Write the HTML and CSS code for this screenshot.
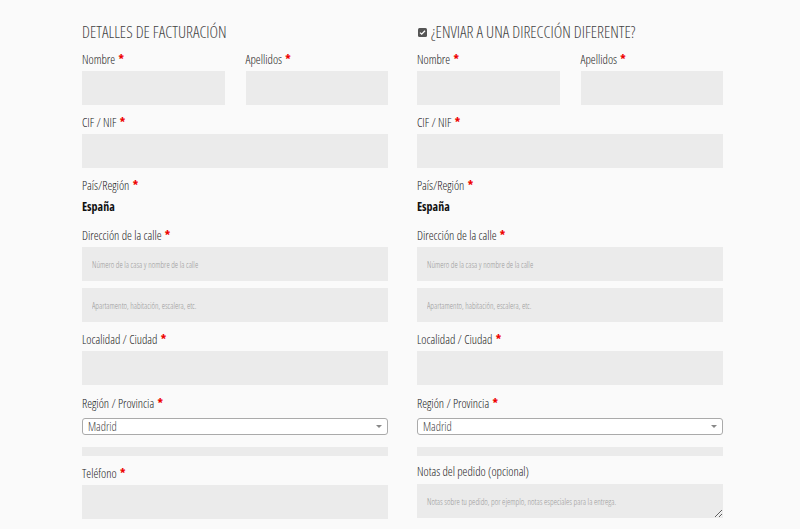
FILE: index.html
```html
<!DOCTYPE html>
<html lang="es">
<head>
<meta charset="utf-8">
<title>Checkout</title>
<link rel="stylesheet" href="styles.css">
</head>
<body>
<div class="page">
  <div class="col">
    <h3 class="title">DETALLES DE FACTURACIÓN</h3>
    <div class="pair">
      <div class="field"><label>Nombre <abbr>*</abbr></label><input class="inp" type="text"></div>
      <div class="field"><label>Apellidos <abbr>*</abbr></label><input class="inp" type="text"></div>
    </div>
    <div class="field"><label>CIF / NIF <abbr>*</abbr></label><input class="inp" type="text"></div>
    <div class="field country"><label>País/Región <abbr>*</abbr></label><strong class="value">España</strong></div>
    <div class="field"><label>Dirección de la calle <abbr>*</abbr></label><input class="inp" type="text" placeholder="Número de la casa y nombre de la calle"><input class="inp second" type="text" placeholder="Apartamento, habitación, escalera, etc."></div>
    <div class="field city"><label>Localidad / Ciudad <abbr>*</abbr></label><input class="inp" type="text"></div>
    <div class="field"><label>Región / Provincia <abbr>*</abbr></label>
      <div class="select"><span>Madrid</span><svg class="arrow" width="6" height="3" viewBox="0 0 6 3"><path d="M0 0H6L3 3Z" fill="#888"/></svg></div>
      <div class="bar"></div>
    </div>
    <div class="field"><label>Teléfono <abbr>*</abbr></label><input class="inp" type="text"></div>
  </div>
  <div class="col">
    <h3 class="title"><svg class="check" width="9" height="9" viewBox="0 0 9 9"><rect width="9" height="9" rx="1.5" fill="#555"/><path d="M2 4.6L3.7 6.2L7 2.8" fill="none" stroke="#fff" stroke-width="1.3"/></svg>¿ENVIAR A UNA DIRECCIÓN DIFERENTE?</h3>
    <div class="pair">
      <div class="field"><label>Nombre <abbr>*</abbr></label><input class="inp" type="text"></div>
      <div class="field"><label>Apellidos <abbr>*</abbr></label><input class="inp" type="text"></div>
    </div>
    <div class="field"><label>CIF / NIF <abbr>*</abbr></label><input class="inp" type="text"></div>
    <div class="field country"><label>País/Región <abbr>*</abbr></label><strong class="value">España</strong></div>
    <div class="field"><label>Dirección de la calle <abbr>*</abbr></label><input class="inp" type="text" placeholder="Número de la casa y nombre de la calle"><input class="inp second" type="text" placeholder="Apartamento, habitación, escalera, etc."></div>
    <div class="field city"><label>Localidad / Ciudad <abbr>*</abbr></label><input class="inp" type="text"></div>
    <div class="field tight"><label>Región / Provincia <abbr>*</abbr></label>
      <div class="select"><span>Madrid</span><svg class="arrow" width="6" height="3" viewBox="0 0 6 3"><path d="M0 0H6L3 3Z" fill="#888"/></svg></div>
      <div class="bar"></div>
    </div>
    <div class="field notes"><label>Notas del pedido (opcional)</label><textarea class="inp area" placeholder="Notas sobre tu pedido, por ejemplo, notas especiales para la entrega."></textarea></div>
  </div>
</div>
</body>
</html>
```
FILE: styles.css
```css
html, body {
  margin: 0;
  padding: 0;
  background: #fafafa;
}
body {
  font-family: "Open Sans", "DejaVu Sans", sans-serif;
  font-stretch: 75%;
  color: #333;
  font-size: 12px;
}
.page {
  display: flex;
  gap: 29px;
  padding: 20px 0 0 82px;
}
.col {
  width: 306px;
  display: flex;
  flex-direction: column;
}
.title {
  margin: 0 0 6px;
  font-size: 16.2px;
  line-height: 24px;
  font-weight: 300;
  color: #444;
  display: flex;
  align-items: center;
  white-space: nowrap;
}
.check {
  margin: 0 4px 0 1px;
  flex: none;
}
.pair {
  display: grid;
  grid-template-columns: 1fr 1fr;
  gap: 21px;
}
.field {
  display: flex;
  flex-direction: column;
  margin-bottom: 8px;
}
.field label {
  display: block;
  line-height: 20px;
  margin-bottom: 1px;
  font-weight: 300;
  color: #222;
  font-size: 12.3px;
}
abbr {
  color: #e00;
  font-weight: 700;
  text-decoration: none;
  margin-left: 1px;
}
.country {
  margin-bottom: 9px;
}
.value {
  font-weight: 700;
  color: #111;
  line-height: 20px;
  font-size: 12px;
}
.inp {
  display: block;
  box-sizing: border-box;
  width: 100%;
  height: 34px;
  margin: 0;
  border: none;
  border-radius: 0;
  background: #ebebeb;
  padding: 0 10px;
  font-family: inherit;
  font-stretch: 75%;
  font-size: 8.3px;
  font-weight: 300;
  outline: none;
}
.inp::placeholder {
  color: #999;
}
.second {
  margin-top: 7px;
}
.city {
  margin-bottom: 9px;
}
.select {
  margin-top: 3px;
  box-sizing: border-box;
  height: 17px;
  border: 1px solid #aaa;
  border-radius: 3px;
  background: #fff;
  display: flex;
  align-items: center;
  justify-content: space-between;
  padding: 0 5px 0 5px;
  font-weight: 300;
  color: #444;
  font-size: 12px;
}
.arrow {
  flex: none;
}
.bar {
  margin-top: 12px;
  height: 9px;
  background: #ebebeb;
}
.tight {
  margin-bottom: 6px;
}
.notes label {
  margin-bottom: 2px;
}
.area {
  height: 34px;
  padding: 12px 10px;
  resize: vertical;
  line-height: 12px;
  font-size: 8.4px;
}
```
